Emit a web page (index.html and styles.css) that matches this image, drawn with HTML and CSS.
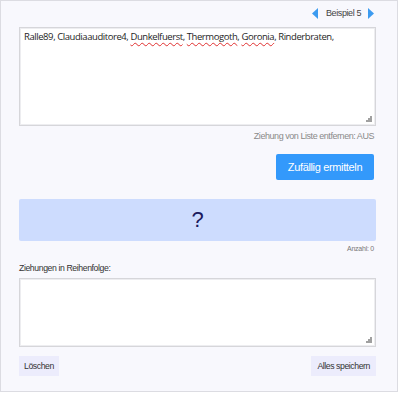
FILE: index.html
```html
<!DOCTYPE html>
<html lang="de">
<head>
  <meta charset="UTF-8">
  <title>Zufallsgenerator</title>
  <link rel="stylesheet" href="styles.css">
</head>
<body>
  <div class="panel">
    <div class="nav">
      <svg class="arrow" width="6" height="11" viewBox="0 0 6 11"><polygon points="6,0 0,5.5 6,11" fill="#3c9bf0"/></svg>
      <span class="nav-label">Beispiel 5</span>
      <svg class="arrow" width="6" height="11" viewBox="0 0 6 11"><polygon points="0,0 6,5.5 0,11" fill="#3c9bf0"/></svg>
    </div>
    <div class="box names">Ralle89, Claudiaauditore4, <span class="typo">Dunkelfuerst</span>, <span class="typo">Thermogoth</span>, <span class="typo">Goronia</span>, Rinderbraten,<span class="grip"></span></div>
    <div class="note">Ziehung von Liste entfernen: AUS</div>
    <div class="actions-right">
      <button class="btn-primary">Zufällig ermitteln</button>
    </div>
    <div class="result">?</div>
    <div class="count">Anzahl: 0</div>
    <div class="label">Ziehungen in Reihenfolge:</div>
    <div class="box history"><span class="grip"></span></div>
    <div class="footer">
      <button class="btn-light">Löschen</button>
      <button class="btn-light">Alles speichern</button>
    </div>
  </div>
</body>
</html>
```

FILE: styles.css
```css
body {
  margin: 0;
  font-family: "Liberation Sans", Arial, sans-serif;
  background: #fff;
}
.panel {
  width: 398px;
  height: 392px;
  box-sizing: border-box;
  border: 1px solid #dcdce2;
  background: #f8f8fd;
  padding: 5px 21px 0 18px;
}
.nav {
  display: flex;
  justify-content: flex-end;
  align-items: center;
  height: 14px;
  padding-right: 2px;
}
.nav-label {
  font-size: 9px;
  letter-spacing: -0.4px;
  color: #444;
  margin: 0 7px 0 8px;
}
.box {
  position: relative;
  box-sizing: border-box;
  background: #fff;
  border: 1px solid #d6d6da;
  box-shadow: inset 0 0 0 1px #ededf0;
}
.names {
  margin-top: 7px;
  height: 99px;
  padding: 2px 4px;
  font-family: "Open Sans", sans-serif;
  font-size: 9.5px;
  letter-spacing: -0.43px;
  color: #1e1e1e;
  line-height: 14px;
}
.typo {
  text-decoration: underline wavy #e03030;
  text-decoration-thickness: 1px;
  text-underline-offset: 2px;
}
.grip {
  position: absolute;
  right: 3px;
  bottom: 3px;
  width: 6px;
  height: 6px;
  background:
    radial-gradient(circle, #999 0.7px, transparent 0.8px) 4px 0 / 2px 2px no-repeat,
    radial-gradient(circle, #999 0.7px, transparent 0.8px) 2px 2px / 2px 2px no-repeat,
    radial-gradient(circle, #999 0.7px, transparent 0.8px) 4px 2px / 2px 2px no-repeat,
    radial-gradient(circle, #999 0.7px, transparent 0.8px) 0 4px / 2px 2px no-repeat,
    radial-gradient(circle, #999 0.7px, transparent 0.8px) 2px 4px / 2px 2px no-repeat,
    radial-gradient(circle, #999 0.7px, transparent 0.8px) 4px 4px / 2px 2px no-repeat;
}
.note {
  margin-top: 4px;
  text-align: right;
  padding-right: 2px;
  font-size: 9px;
  letter-spacing: -0.45px;
  line-height: 13px;
  color: #8a8a8a;
}
.actions-right {
  display: flex;
  justify-content: flex-end;
  padding-right: 2px;
  margin-top: 11px;
}
.btn-primary {
  width: 98px;
  height: 26px;
  border: none;
  border-radius: 2px;
  background: #3399fb;
  color: #fff;
  font-family: inherit;
  font-size: 11px;
  letter-spacing: -0.35px;
  padding: 0;
}
.result {
  margin-top: 19px;
  height: 42px;
  background: #cddcfe;
  border-radius: 2px;
  display: flex;
  align-items: center;
  justify-content: center;
  font-size: 22px;
  color: #1a1a5e;
}
.count {
  margin-top: 3px;
  text-align: right;
  padding-right: 2px;
  font-size: 7px;
  letter-spacing: -0.25px;
  line-height: 9px;
  color: #777;
}
.label {
  margin-top: 10px;
  font-size: 8.7px;
  letter-spacing: -0.4px;
  line-height: 11px;
  color: #333;
}
.history {
  margin-top: 4px;
  height: 69px;
}
.footer {
  display: flex;
  justify-content: space-between;
  margin-top: 9px;
}
.btn-light {
  height: 20px;
  border: none;
  background: #ececfc;
  color: #333;
  font-family: inherit;
  font-size: 8.7px;
  letter-spacing: -0.42px;
  padding: 0 5px;
}
.btn-light + .btn-light {
  padding: 0 6px;
}
```
